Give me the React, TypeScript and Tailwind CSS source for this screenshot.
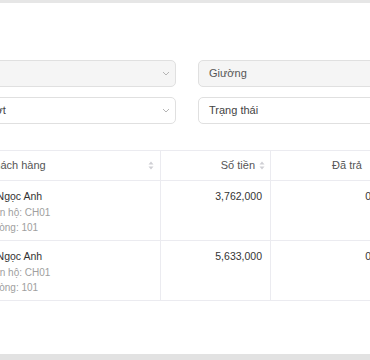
const FONT = { fontFamily: '"Liberation Sans", Arial, sans-serif' };

const ROWS = [
  { name: 'Lê Ngọc Anh', unit: 'CH01', room: '101', amount: '3,762,000', paid: '0' },
  { name: 'Lê Ngọc Anh', unit: 'CH01', room: '101', amount: '5,633,000', paid: '0' },
];

function Chevron() {
  return (
    <svg width="8" height="5" viewBox="0 0 8 5" className="text-[#b5b5b5]">
      <path d="M1 1l3 3 3-3" fill="none" stroke="currentColor" strokeWidth="1" />
    </svg>
  );
}

function Sorter() {
  return (
    <svg width="6" height="9" viewBox="0 0 6 9" className="shrink-0 text-[#cfcfd4]">
      <path d="M3 0.5L5.5 3.5H0.5Z M3 8.5L5.5 5.5H0.5Z" fill="currentColor" />
    </svg>
  );
}

// Bộ lọc + bảng công nợ (phần cắt của trang)
export default function App() {
  return (
    <div className="flex h-[360px] w-[370px] flex-col overflow-hidden bg-white text-[11px] text-[#333]" style={FONT}>
      <div className="h-[3px] shrink-0 bg-[#e6e6e6]" />

      <div className="-ml-[52px] mt-[57px] grid w-[480px] grid-cols-[228px_240px] gap-x-[22px] gap-y-[10px]">
        <div className="flex h-[27px] items-center justify-between rounded-[5px] border border-[#e0e0e0] bg-[#f5f5f5] pl-[11px] pr-[5px] text-[#bbb]">
          <span>Dự án</span>
          <Chevron />
        </div>
        <div className="flex h-[27px] items-center rounded-[5px] border border-[#e0e0e0] bg-[#f5f5f5] px-[10px] text-[#555]">
          Giường
        </div>
        <div className="flex h-[27px] items-center justify-between rounded-[5px] border border-[#e0e0e0] bg-white pl-[11px] pr-[5px] text-[#444]">
          <span>Chọn đợt</span>
          <Chevron />
        </div>
        <div className="flex h-[27px] items-center rounded-[5px] border border-[#e0e0e0] bg-white px-[10px] text-[#444]">
          Trạng thái
        </div>
      </div>

      <div className="-ml-[21px] mt-[26px] w-[402px] border-t border-[#ebebf0]">
        <div className="grid h-[30px] grid-cols-[182px_110px_110px] border-b border-[#ebebf0] text-[#555]">
          <div className="flex items-center justify-between border-r border-[#ebebf0] pl-[8px] pr-[6px]">
            <span>Khách hàng</span>
            <Sorter />
          </div>
          <div className="flex items-center justify-end gap-[4px] border-r border-[#ebebf0] pr-[5px]">
            <span>Số tiền</span>
            <Sorter />
          </div>
          <div className="flex items-center justify-end gap-[8px] pr-[5px]">
            <span>Đã trả</span>
            <Sorter />
          </div>
        </div>
        {ROWS.map((r, i) => (
          <div key={i} className="grid h-[60px] grid-cols-[182px_110px_110px] border-b border-[#ebebf0] text-[10.5px]">
            <div className="border-r border-[#ebebf0] pl-[8px] pt-[6px]">
              <div className="-ml-[5px] leading-[18px] text-[#333]">{r.name}</div>
              <div className="text-[10px] leading-[15px] text-[#a0a0a0]">Căn hộ: {r.unit}</div>
              <div className="text-[10px] leading-[15px] text-[#a0a0a0]">Phòng: {r.room}</div>
            </div>
            <div className="border-r border-[#ebebf0] pr-[8px] pt-[6px] text-right leading-[18px]">{r.amount}</div>
            <div className="pr-[10px] pt-[6px] text-right leading-[18px]">{r.paid}</div>
          </div>
        ))}
      </div>

      <div className="flex-1" />
      <div className="h-[6px] shrink-0 bg-[#e2e2e2]" />
    </div>
  );
}
